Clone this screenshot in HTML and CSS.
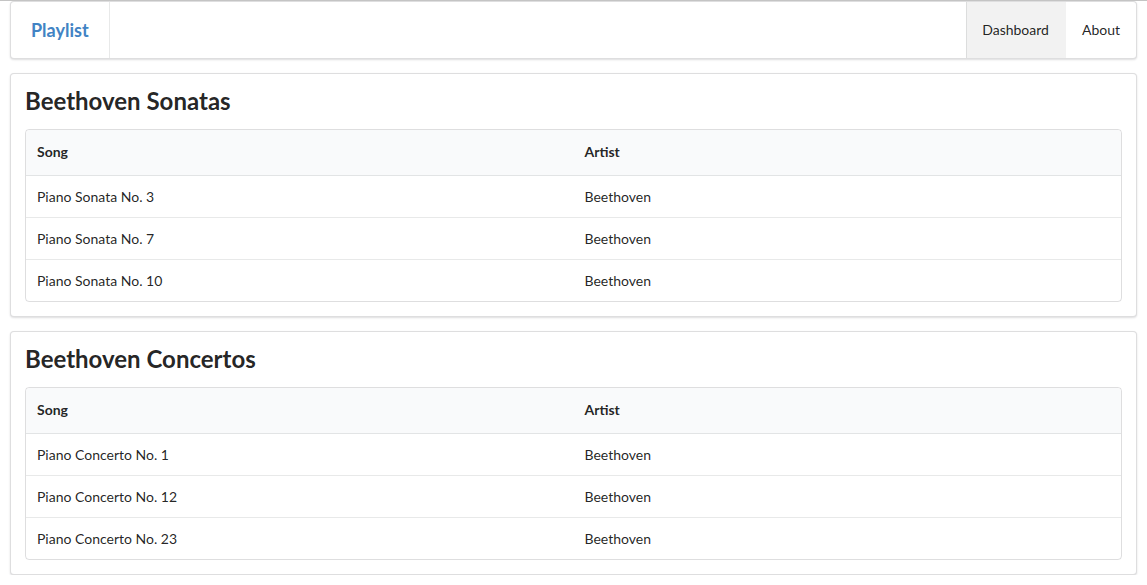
FILE: index.html
```html
<!DOCTYPE html>
<html>
<head>
<meta charset="utf-8">
<title>Playlist</title>
<link rel="stylesheet" href="styles.css">
</head>
<body>
<div class="page">
  <nav class="menu">
    <a class="item brand">Playlist</a>
    <div class="right">
      <a class="item active">Dashboard</a>
      <a class="item">About</a>
    </div>
  </nav>

  <section class="segment">
    <h2 class="header">Beethoven Sonatas</h2>
    <table class="table">
      <thead>
        <tr><th>Song</th><th>Artist</th></tr>
      </thead>
      <tbody>
        <tr><td>Piano Sonata No. 3</td><td>Beethoven</td></tr>
        <tr><td>Piano Sonata No. 7</td><td>Beethoven</td></tr>
        <tr><td>Piano Sonata No. 10</td><td>Beethoven</td></tr>
      </tbody>
    </table>
  </section>

  <section class="segment">
    <h2 class="header">Beethoven Concertos</h2>
    <table class="table">
      <thead>
        <tr><th>Song</th><th>Artist</th></tr>
      </thead>
      <tbody>
        <tr><td>Piano Concerto No. 1</td><td>Beethoven</td></tr>
        <tr><td>Piano Concerto No. 12</td><td>Beethoven</td></tr>
        <tr><td>Piano Concerto No. 23</td><td>Beethoven</td></tr>
      </tbody>
    </table>
  </section>
</div>
</body>
</html>
```

FILE: styles.css
```css
html, body {
  margin: 0;
  padding: 0;
  background: #fff;
}
body {
  font-family: Lato, "Helvetica Neue", Arial, sans-serif;
  font-size: 14px;
  line-height: 20px;
  color: rgba(0, 0, 0, 0.87);
  border-top: 1px solid #c4c4c4;
}
.page {
  padding: 0 10px;
}
.menu {
  display: flex;
  justify-content: space-between;
  height: 56px;
  border: 1px solid rgba(34, 36, 38, 0.15);
  border-radius: 4px;
  box-shadow: 0 1px 2px 0 rgba(34, 36, 38, 0.15);
  background: #fff;
}
.menu .right {
  display: flex;
}
.item {
  display: flex;
  align-items: center;
  padding: 0 17px 0 15px;
  color: rgba(0, 0, 0, 0.87);
  border-left: 1px solid rgba(34, 36, 38, 0.1);
  cursor: pointer;
}
.item.brand {
  border-left: none;
  border-right: 1px solid rgba(34, 36, 38, 0.1);
  padding: 0 20px;
  font-size: 18px;
  font-weight: 700;
  color: #4183c4;
}
.item.active {
  background: rgba(0, 0, 0, 0.05);
}
.right .item + .item {
  border-left: none;
  padding: 0 16px;
}
.segment {
  margin-top: 14px;
  padding: 14px;
  border: 1px solid rgba(34, 36, 38, 0.15);
  border-radius: 4px;
  box-shadow: 0 1px 2px 0 rgba(34, 36, 38, 0.15);
  background: #fff;
}
.header {
  margin: 0 0 16px;
  font-size: 24px;
  line-height: 25px;
  font-weight: 700;
}
.table {
  width: 100%;
  table-layout: fixed;
  border-collapse: separate;
  border-spacing: 0;
  border: 1px solid rgba(34, 36, 38, 0.15);
  border-radius: 4px;
  text-align: left;
}
.table th {
  width: 50%;
  padding: 12px 11px 13px;
  background: #f9fafb;
  font-weight: 700;
  border-bottom: 1px solid rgba(34, 36, 38, 0.1);
}
.table th:first-child { border-top-left-radius: 4px; }
.table th:last-child { border-top-right-radius: 4px; }
.table td {
  padding: 11px 11px 10px;
  border-top: 1px solid rgba(34, 36, 38, 0.1);
}
.table tbody tr:first-child td {
  border-top: none;
}
```
